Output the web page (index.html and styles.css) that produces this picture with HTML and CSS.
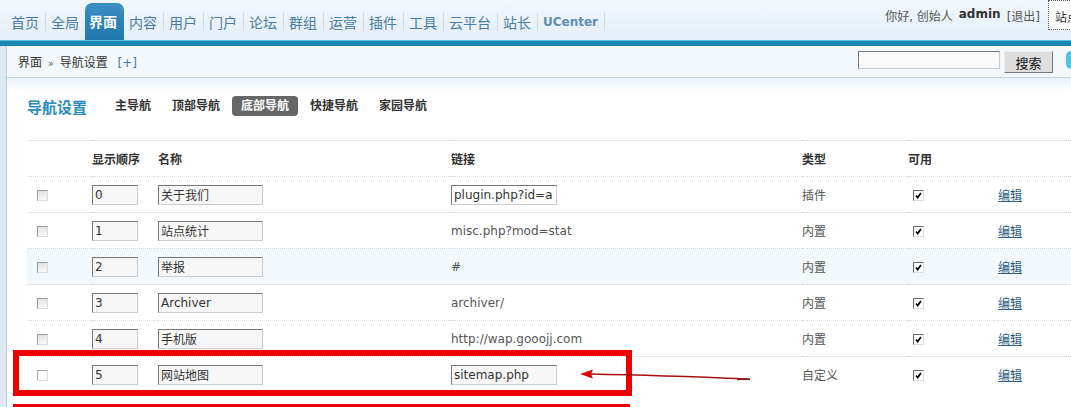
FILE: index.html
```html
<!DOCTYPE html>
<html lang="zh-CN">
<head>
  <meta charset="UTF-8" />
  <title>导航设置</title>
  <link rel="stylesheet" href="styles.css">
</head>
<body>
  <div class="header">
    <ul class="nav">
      <li><a href="#">首页</a></li>
      <li><a href="#">全局</a></li>
      <li class="on"><a href="#">界面</a></li>
      <li><a href="#">内容</a></li>
      <li><a href="#">用户</a></li>
      <li><a href="#">门户</a></li>
      <li><a href="#">论坛</a></li>
      <li><a href="#">群组</a></li>
      <li><a href="#">运营</a></li>
      <li><a href="#">插件</a></li>
      <li><a href="#">工具</a></li>
      <li><a href="#">云平台</a></li>
      <li><a href="#">站长</a></li>
      <li class="uc"><a href="#">UCenter</a></li>
    </ul>
    <div class="user">
      你好, 创始人 <b>admin</b> <a href="#">[退出]</a>
      <span class="sitebox">站点地图</span>
    </div>
  </div>
  <div class="bar"></div>

  <div class="main">
    <div class="side"></div>
    <div class="body">
      <div class="crumb">
        <div class="path">界面 <span class="sep">»</span> 导航设置 <a href="#" class="add">[+]</a></div>
        <div class="search">
          <input type="text" class="kw">
          <button class="btn">搜索</button>
          <span class="help"></span>
        </div>
      </div>

      <div class="content">
        <div class="tabs">
          <h3>导航设置</h3>
          <a href="#">主导航</a>
          <a href="#">顶部导航</a>
          <a href="#" class="cur">底部导航</a>
          <a href="#">快捷导航</a>
          <a href="#">家园导航</a>
        </div>

        <table class="list">
          <colgroup>
            <col style="width:65px"><col style="width:66px"><col style="width:293px"><col style="width:351px">
            <col style="width:106px"><col style="width:90px"><col style="width:73px">
          </colgroup>
          <tr class="head">
            <th></th><th>显示顺序</th><th>名称</th><th>链接</th><th>类型</th><th>可用</th><th></th>
          </tr>
          <tr>
            <td class="c1"><span class="cb"></span></td>
            <td><input class="ord" value="0"></td>
            <td><input class="name" value="关于我们"></td>
            <td><input class="url white" value="plugin.php?id=a"></td>
            <td>插件</td>
            <td class="c6"><span class="cb on"><svg viewBox="0 0 11 11"><path d="M2.5 5.5 L4.5 8 L8.5 2.5" /></svg></span></td>
            <td><a href="#" class="edit">编辑</a></td>
          </tr>
          <tr>
            <td class="c1"><span class="cb"></span></td>
            <td><input class="ord" value="1"></td>
            <td><input class="name" value="站点统计"></td>
            <td>misc.php?mod=stat</td>
            <td>内置</td>
            <td class="c6"><span class="cb on"><svg viewBox="0 0 11 11"><path d="M2.5 5.5 L4.5 8 L8.5 2.5" /></svg></span></td>
            <td><a href="#" class="edit">编辑</a></td>
          </tr>
          <tr class="hover">
            <td class="c1"><span class="cb"></span></td>
            <td><input class="ord" value="2"></td>
            <td><input class="name" value="举报"></td>
            <td>#</td>
            <td>内置</td>
            <td class="c6"><span class="cb on"><svg viewBox="0 0 11 11"><path d="M2.5 5.5 L4.5 8 L8.5 2.5" /></svg></span></td>
            <td><a href="#" class="edit">编辑</a></td>
          </tr>
          <tr>
            <td class="c1"><span class="cb"></span></td>
            <td><input class="ord" value="3"></td>
            <td><input class="name" value="Archiver"></td>
            <td>archiver/</td>
            <td>内置</td>
            <td class="c6"><span class="cb on"><svg viewBox="0 0 11 11"><path d="M2.5 5.5 L4.5 8 L8.5 2.5" /></svg></span></td>
            <td><a href="#" class="edit">编辑</a></td>
          </tr>
          <tr>
            <td class="c1"><span class="cb"></span></td>
            <td><input class="ord" value="4"></td>
            <td><input class="name" value="手机版"></td>
            <td>http://wap.gooojj.com</td>
            <td>内置</td>
            <td class="c6"><span class="cb on"><svg viewBox="0 0 11 11"><path d="M2.5 5.5 L4.5 8 L8.5 2.5" /></svg></span></td>
            <td><a href="#" class="edit">编辑</a></td>
          </tr>
          <tr>
            <td class="c1"><span class="cb light"></span></td>
            <td><input class="ord" value="5"></td>
            <td><input class="name" value="网站地图"></td>
            <td><input class="url" value="sitemap.php"></td>
            <td>自定义</td>
            <td class="c6"><span class="cb on"><svg viewBox="0 0 11 11"><path d="M2.5 5.5 L4.5 8 L8.5 2.5" /></svg></span></td>
            <td><a href="#" class="edit">编辑</a></td>
          </tr>
        </table>
      </div>
    </div>
  </div>

  <!-- red annotation drawn over the screenshot -->
  <div class="mark"></div>
  <div class="mark next"></div>
  <svg class="arrow" width="1071" height="407" viewBox="0 0 1071 407">
    <path d="M750 379 C700 377 640 375 590 374" fill="none" stroke="#a80f0f" stroke-width="1.5" />
    <path d="M737 379.5 L750 379.5" stroke="#6a2a2a" stroke-width="1.2" />
    <polygon points="580,374 593,369.5 591,374 593,378.5" fill="#e00000" />
  </svg>
</body>
</html>
```

FILE: styles.css
```css
body {
  margin: 0;
  font-family: "DejaVu Sans", "Noto Sans CJK SC", sans-serif;
  font-size: 12px;
  color: #555;
  background: #fff;
  width: 1071px;
  height: 407px;
  overflow: hidden;
  position: relative;
}

a {
  text-decoration: none;
}

/* header */
.header {
  height: 40px;
  display: flex;
  justify-content: space-between;
  background: linear-gradient(#f2f7fc, #e4eef7);
}

.nav {
  list-style: none;
  margin: 0;
  padding: 0 0 0 6px;
  display: flex;
  align-items: flex-end;
}

.nav li {
  height: 37px;
  display: flex;
  align-items: center;
}

.nav li a {
  display: block;
  padding: 0 6px 0 5px;
  line-height: 18px;
  font-size: 14px;
  color: #4a7ca3;
  border-right: 1px solid #cddbe7;
  font-family: "Noto Sans CJK SC", sans-serif;
}

.nav li.on a {
  height: 37px;
  line-height: 37px;
  padding: 0 6px 0 4px;
  margin-left: -1px;
  background: linear-gradient(#3b8fc6, #2377b1);
  border-radius: 7px 7px 0 0;
  border-right: 1px solid transparent;
  color: #fff;
  font-weight: bold;
}

.nav li.uc a {
  font-family: "DejaVu Sans", sans-serif;
  font-size: 12px;
  font-weight: bold;
  color: #5d8db3;
}

.user {
  display: flex;
  align-items: flex-start;
  padding-top: 7px;
  margin-right: -57px;
  color: #555;
  white-space: nowrap;
}

.user b {
  color: #333;
  margin: 0 6px;
}

.user a {
  color: #555;
  margin-right: 8px;
}

.sitebox {
  flex-shrink: 0;
  margin-top: -7px;
  height: 30px;
  width: 80px;
  padding: 7px 0 0 6px;
  box-sizing: border-box;
  background: #fff;
  border: 1px dotted #555;
  color: #333;
}

.bar {
  height: 5px;
  border-top: 1px solid #5ac2dd;
  background: #1a86b1;
}

/* main frame */
.main {
  display: flex;
  height: 361px;
}

.side {
  width: 6px;
  background: #dce9f3;
  border-right: 1px solid #b7cfe0;
}

.body {
  flex: 1;
}

.crumb {
  height: 31px;
  border-bottom: 1px solid #bfd7e4;
  background: #f2f8fb;
  display: flex;
  justify-content: space-between;
  align-items: center;
  padding-left: 11px;
  color: #333;
}

.crumb .sep {
  color: #666;
  font-size: 10px;
  margin: 0 2px;
}

.crumb .add {
  color: #3d7cab;
  margin-left: 6px;
}

.search {
  display: flex;
  align-items: flex-start;
  padding-top: 1px;
}

.kw {
  width: 142px;
  height: 18px;
  box-sizing: border-box;
  border: 1px solid;
  border-color: #777 #ccc #ccc #777;
  background: #fafafa;
  margin: 0 4px 0 0;
}

.btn {
  width: 49px;
  height: 22px;
  border: 1px solid;
  border-color: #eee #777 #777 #eee;
  background: #dedede;
  font-family: "Noto Sans CJK SC", sans-serif;
  font-size: 13px;
  color: #111;
  padding: 0;
  margin-right: 13px;
}

.help {
  width: 5px;
  height: 18px;
  background: #58c2dd;
  border-radius: 5px 0 0 5px;
}

/* content */
.content {
  padding: 18px 0 0 20px;
  background: linear-gradient(#e8f2f8, #fff 14px);
}

.tabs {
  display: flex;
  align-items: center;
  gap: 3px;
  height: 20px;
  margin-bottom: 24px;
}

.tabs h3 {
  margin: 0 16px 0 0;
  font-size: 15px;
  color: #2b8dbd;
  font-family: "Noto Sans CJK SC", sans-serif;
}

.tabs a {
  padding: 0 9px;
  line-height: 20px;
  font-weight: bold;
  color: #333;
  border-radius: 4px;
}

.tabs a.cur {
  background: #666;
  color: #fff;
}

.list {
  width: 1044px;
  table-layout: fixed;
  border-collapse: collapse;
}

.list th,
.list td {
  height: 35px;
  padding: 0;
  text-align: left;
  border-top: 1px dotted #cfd8de;
  white-space: nowrap;
}

.list th {
  font-weight: bold;
  color: #333;
}

.list tr.hover td {
  background: #f2f8fc;
}

.list td.c1 {
  padding-left: 10px;
}

.list td.c6 {
  padding-left: 5px;
}

.list input {
  height: 20px;
  box-sizing: border-box;
  border: 1px solid;
  border-color: #777 #ccc #ccc #777;
  background: #f7f7f7;
  padding: 0 2px;
  font-family: "DejaVu Sans", "Noto Sans CJK SC", sans-serif;
  font-size: 12px;
  color: #333;
  margin: 0;
  vertical-align: middle;
}

.list input.ord {
  width: 46px;
}

.list input.name {
  width: 105px;
}

.list input.url {
  width: 106px;
}

.list input.white {
  background: #fff;
}

.cb {
  display: inline-block;
  width: 11px;
  height: 11px;
  box-sizing: border-box;
  border: 1px solid;
  border-color: #9a9a9a #ddd #ddd #9a9a9a;
  background: linear-gradient(#e4e4e4, #f6f6f6);
  vertical-align: middle;
}

.cb.light {
  background: #fff;
  border-color: #aaa #ddd #ddd #aaa;
}

.cb.on {
  border-color: #6b6b6b #dedede #dedede #6b6b6b;
  background: #fff;
}

.cb svg {
  display: block;
  width: 9px;
  height: 9px;
}

.cb svg path {
  fill: none;
  stroke: #000;
  stroke-width: 2;
}

.edit {
  color: #2b5d83;
  text-decoration: underline;
}

/* annotation overlay */
.mark {
  position: absolute;
  left: 13px;
  top: 350px;
  width: 619px;
  height: 46px;
  box-sizing: border-box;
  border: 6px solid #ec0000;
}

.mark.next {
  top: 404px;
  width: 617px;
  border-width: 3px 6px 0;
  height: 40px;
}

.arrow {
  position: absolute;
  left: 0;
  top: 0;
  pointer-events: none;
}
```
